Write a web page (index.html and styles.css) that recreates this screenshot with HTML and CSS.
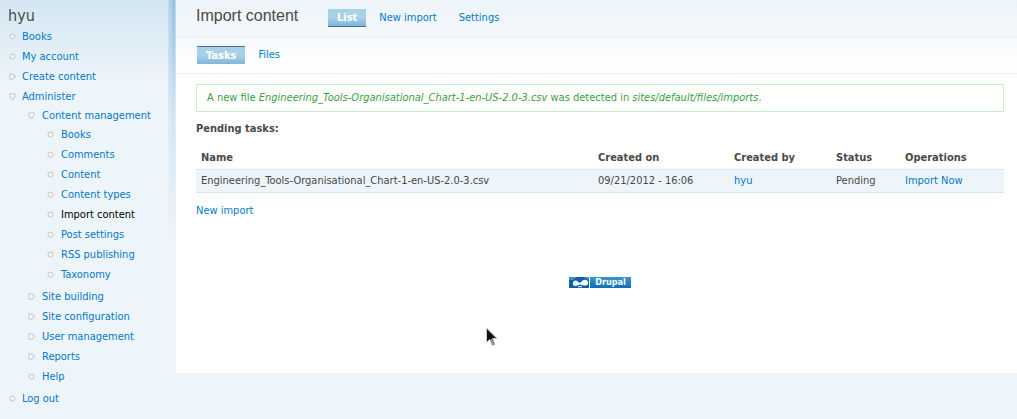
FILE: index.html
```html
<!DOCTYPE html>
<html lang="en">
<head>
<meta charset="utf-8">
<title>Import content</title>
<meta name="viewport" content="width=device-width, initial-scale=1">
<link rel="stylesheet" href="styles.css">
</head>
<body>
<svg class="sprite" aria-hidden="true">
  <symbol id="leaf" viewBox="0 0 7 7"><circle cx="3.5" cy="3.5" r="2.3"/></symbol>
  <symbol id="collapsed" viewBox="0 0 7 7"><path d="M1 1H3.6L6.2 3.1V3.9L3.6 6H1Z"/></symbol>
  <symbol id="expanded" viewBox="0 0 7 7"><path d="M1 1H6V3.4L3.9 6.2H3.1L1 3.4Z"/></symbol>
</svg>
<div class="page">
  <aside class="sidebar">
    <h2 class="user">hyu</h2>
    <nav>
      <ul class="menu">
        <li><svg class="mark"><use href="#leaf"/></svg><a href="#">Books</a></li>
        <li><svg class="mark"><use href="#leaf"/></svg><a href="#">My account</a></li>
        <li><svg class="mark"><use href="#collapsed"/></svg><a href="#">Create content</a></li>
        <li><svg class="mark"><use href="#expanded"/></svg><a href="#">Administer</a>
          <ul class="menu submenu">
            <li><svg class="mark"><use href="#expanded"/></svg><a href="#">Content management</a>
              <ul class="menu submenu">
                <li><svg class="mark"><use href="#leaf"/></svg><a href="#">Books</a></li>
                <li><svg class="mark"><use href="#leaf"/></svg><a href="#">Comments</a></li>
                <li><svg class="mark"><use href="#leaf"/></svg><a href="#">Content</a></li>
                <li><svg class="mark"><use href="#leaf"/></svg><a href="#">Content types</a></li>
                <li><svg class="mark"><use href="#leaf"/></svg><a class="current" href="#" aria-current="page">Import content</a></li>
                <li><svg class="mark"><use href="#leaf"/></svg><a href="#">Post settings</a></li>
                <li><svg class="mark"><use href="#leaf"/></svg><a href="#">RSS publishing</a></li>
                <li><svg class="mark"><use href="#leaf"/></svg><a href="#">Taxonomy</a></li>
              </ul>
            </li>
            <li><svg class="mark"><use href="#collapsed"/></svg><a href="#">Site building</a></li>
            <li><svg class="mark"><use href="#collapsed"/></svg><a href="#">Site configuration</a></li>
            <li><svg class="mark"><use href="#collapsed"/></svg><a href="#">User management</a></li>
            <li><svg class="mark"><use href="#collapsed"/></svg><a href="#">Reports</a></li>
            <li><svg class="mark"><use href="#leaf"/></svg><a href="#">Help</a></li>
          </ul>
        </li>
        <li><svg class="mark"><use href="#leaf"/></svg><a href="#">Log out</a></li>
      </ul>
    </nav>
  </aside>
  <main class="content">
    <header class="bar">
      <h1 class="title">Import content</h1>
      <nav class="tabs">
        <a class="tab tab-primary" href="#" aria-current="page">List</a>
        <a class="tab" href="#">New import</a>
        <a class="tab" href="#">Settings</a>
      </nav>
    </header>
    <nav class="bar bar-secondary tabs">
      <a class="tab tab-secondary" href="#" aria-current="page">Tasks</a>
      <a class="tab" href="#">Files</a>
    </nav>
    <div class="body">
      <p class="status">A new file <em>Engineering_Tools-Organisational_Chart-1-en-US-2.0-3.csv</em> was detected in <em>sites/default/files/imports</em>.</p>
      <h3 class="heading" id="pending">Pending tasks:</h3>
      <table class="tasks" aria-labelledby="pending">
        <colgroup><col><col class="col-date"><col class="col-author"><col class="col-status"><col class="col-ops"></colgroup>
        <thead>
          <tr><th scope="col">Name</th><th scope="col">Created on</th><th scope="col">Created by</th><th scope="col">Status</th><th scope="col">Operations</th></tr>
        </thead>
        <tbody>
          <tr><td>Engineering_Tools-Organisational_Chart-1-en-US-2.0-3.csv</td><td>09/21/2012 - 16:06</td><td><a href="#">hyu</a></td><td>Pending</td><td><a href="#">Import Now</a></td></tr>
        </tbody>
      </table>
      <a class="new" href="#">New import</a>
      <footer class="footer">
        <a class="badge" href="#">
          <svg class="badge-logo" viewBox="0 0 20 11" aria-hidden="true">
            <path fill="#0d62a5" d="M0 0H20V11H0Z"/>
            <path fill="#3b91cb" d="M0 0H8L4 3H0ZM14 0H20V3Z"/>
            <path fill="#fff" d="M4 6C4 3.500 7 2.500 9 5L11 6C13 3.500 15 2 17.500 3C20 4.500 19.500 8 17 8.500C14.500 9 12.500 7.500 11 7.500C9.500 7.500 8 9 6.500 9C4.500 9 3.500 8 4 6Z"/>
            <path fill="none" stroke="#fff" d="M9 10Q11 8.800 13 10"/>
          </svg>
          <span class="badge-text">Drupal</span>
        </a>
      </footer>
    </div>
  </main>
</div>
<svg class="pointer" viewBox="0 0 12 20" aria-hidden="true">
  <path d="M.5 1V15.500L3.800 12.500L6.500 18.500L9 17.300L6.500 11.500H11Z" fill="#111" stroke="#ccc"/>
  <path d="M5 12.500L7.300 17.500" stroke="#999" stroke-width="2"/>
</svg>
</body>
</html>
```
FILE: styles.css
```css
* { box-sizing: border-box; }
body {
  margin: 0;
  background: #edf4fa;
  color: #494949;
  font: 11px/20px "DejaVu Sans Condensed", "DejaVu Sans", sans-serif;
}
a { color: #027ac6; text-decoration: none; }
h1, h2, h3, p { margin: 0; font-weight: normal; }
.sprite { display: none; }
.page {
  display: grid;
  grid-template-columns: 176px minmax(0, 1fr);
  align-items: start;
  background: linear-gradient(#d2e6f2, #edf4fa 80px);
}
.sidebar {
  position: relative;
  padding: 5px 8px 11px;
}
.sidebar::after {
  content: "";
  position: absolute;
  top: 0;
  right: 0;
  width: 8px;
  height: 240px;
  background: linear-gradient(to right, #c0dbed, #90bfe0 80%, #d3e5f2);
  mask-image: linear-gradient(#000, #0005 110px, transparent);
}
.user { font-size: 16px; line-height: 22px; }
.menu { margin: 0; padding: 0; list-style: none; }
.menu li { padding-left: 14px; }
.submenu { margin: -1px 0 2px -14px; padding-left: 20px; }
.submenu .submenu { padding-left: 19px; }
.mark {
  float: left;
  width: 7px;
  height: 7px;
  margin: 6px 0 0 -13px;
  fill: #fff;
  stroke: #d2d2d2;
  stroke-width: 1.4;
}
.submenu .mark { margin-left: -14px; }
.current { color: #000; }
.content {
  padding-bottom: 85px;
  background: linear-gradient(#ecf3f9, #fff 72px);
}
.bar {
  display: flex;
  align-items: center;
  height: 37px;
  padding: 0 20px;
  border-bottom: 1px solid #e9eff3;
}
.bar-secondary { padding-left: 21px; }
.title {
  width: 132px;
  font: 16px/20px "Liberation Sans", Arial, sans-serif;
  padding-bottom: 5px;
}
.tabs { display: flex; gap: 4px; }
.tab { padding: 0 9px; line-height: 18px; }
.tab-primary, .tab-secondary {
  color: #fff;
  font-weight: bold;
  line-height: 17px;
  background: linear-gradient(#a9d0e9 50%, #80b5da);
}
.tab-primary { border-bottom: 1px solid #48708c; }
.tab-secondary { border-top: 1px solid #48708c; }
.body { padding: 10px 13px 0 20px; }
.status {
  padding: 3px 10px;
  border: 1px solid #c7f2c8;
  color: #3a9f3a;
}
.heading { margin-top: 7px; font-size: 11px; font-weight: bold; }
.tasks {
  width: 100%;
  margin: 8px 0;
  border-collapse: collapse;
  table-layout: fixed;
}
.tasks th, .tasks td { padding: 1px 5px; text-align: left; }
.tasks td {
  border: solid #d3e7f4;
  border-width: 1px 0;
  background: #edf4fa;
}
.col-date { width: 136px; }
.col-author { width: 102px; }
.col-status { width: 69px; }
.col-ops { width: 104px; }
.new { display: block; }
.footer { display: flex; justify-content: center; margin-top: 56px; }
.badge { display: flex; gap: 1px; height: 11px; }
.badge-logo { width: 20px; height: 11px; }
.badge-text {
  width: 41px;
  color: #fff;
  background: linear-gradient(#3d96d0, #126db2);
  font: bold 9px/11px "DejaVu Sans Condensed", "DejaVu Sans", sans-serif;
  text-align: center;
}
.pointer { position: absolute; left: 486px; top: 327px; width: 12px; height: 20px; }
```
